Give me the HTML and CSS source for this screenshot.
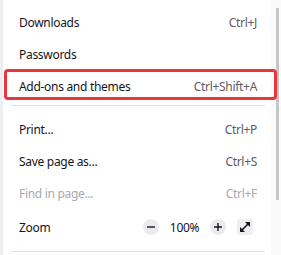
FILE: index.html
```html
<!DOCTYPE html>
<html lang="en">

<head>
    <meta charset="UTF-8">
    <meta name="viewport" content="width=device-width, initial-scale=1.0">
    <title>Menu</title>
    <link rel="stylesheet" href="styles.css">
</head>

<body>
    <div class="edge"></div>

    <div class="menu">
        <div class="item"><span>Downloads</span><span class="key">Ctrl+J</span></div>
        <div class="item"><span>Passwords</span></div>
        <div class="item"><span>Add-ons and themes</span><span class="key">Ctrl+Shift+A</span></div>
        <div class="sep"></div>
        <div class="item"><span>Print...</span><span class="key">Ctrl+P</span></div>
        <div class="item"><span>Save page as...</span><span class="key">Ctrl+S</span></div>
        <div class="item disabled"><span>Find in page...</span><span class="key">Ctrl+F</span></div>
        <div class="item zoom">
            <span>Zoom</span>
            <div class="zoom-controls">
                <div class="round">
                    <svg width="8" height="8" viewBox="0 0 8 8"><path d="M0 4 H8" stroke="#15141a" stroke-width="1.4" /></svg>
                </div>
                <span class="level">100%</span>
                <div class="round">
                    <svg width="8" height="8" viewBox="0 0 8 8"><path d="M0 4 H8 M4 0 V8" stroke="#15141a" stroke-width="1.4" /></svg>
                </div>
                <div class="full">
                    <svg width="12" height="12" viewBox="0 0 12 12">
                        <path d="M2.5 9.5 L9.5 2.5" stroke="#15141a" stroke-width="1.6" />
                        <path d="M1 11 L1 6 L6 11 Z" fill="#15141a" />
                        <path d="M11 1 L11 6 L6 1 Z" fill="#15141a" />
                    </svg>
                </div>
            </div>
        </div>
        <div class="sep sep-last"></div>
    </div>

    <div class="scrollbar">
        <div class="thumb"></div>
    </div>

    <!-- annotation drawn over the menu -->
    <div class="highlight"></div>
</body>

</html>
```

FILE: styles.css
```css
body {
    margin: 0;
    font-family: 'Noto Sans', 'Open Sans', sans-serif;
    font-size: 12px;
    letter-spacing: -0.3px;
    background-color: #fff;
    color: #15141a;
    display: flex;
    height: 255px;
    overflow: hidden;
}

.edge {
    width: 3px;
    background-color: #efeff1;
}

.menu {
    flex: 1;
    padding-top: 6px;
}

.item {
    height: 32px;
    display: flex;
    align-items: center;
    justify-content: space-between;
    padding: 0 14px 0 16px;
}

.key {
    color: #5b5b66;
}

.disabled,
.disabled .key {
    color: #a9a8b0;
}

.sep {
    height: 1px;
    background-color: #e0e0e6;
    margin: 3px 6px 7px 8px;
}

.sep-last {
    margin-top: 6px;
}

.zoom {
    height: 36px;
    padding-right: 18px;
}

.zoom-controls {
    display: flex;
    align-items: center;
}

.round {
    flex: none;
    width: 16px;
    height: 16px;
    border-radius: 50%;
    background-color: #ebebef;
    display: flex;
    align-items: center;
    justify-content: center;
}

.level {
    width: 51px;
    text-align: center;
    color: #15141a;
}

.full {
    flex: none;
    width: 16px;
    height: 16px;
    border-radius: 2px;
    background-color: #efeff1;
    margin-left: 11px;
    display: flex;
    align-items: center;
    justify-content: center;
}

.scrollbar {
    width: 10px;
    background-color: #fafafa;
    padding-top: 8px;
}

.thumb {
    width: 3px;
    height: 192px;
    margin-left: 5px;
    background-color: #c6c6c6;
}

.highlight {
    position: absolute;
    left: 4px;
    top: 69px;
    width: 267px;
    height: 25px;
    border: 3px solid #e8363c;
    border-radius: 4px;
}
```
